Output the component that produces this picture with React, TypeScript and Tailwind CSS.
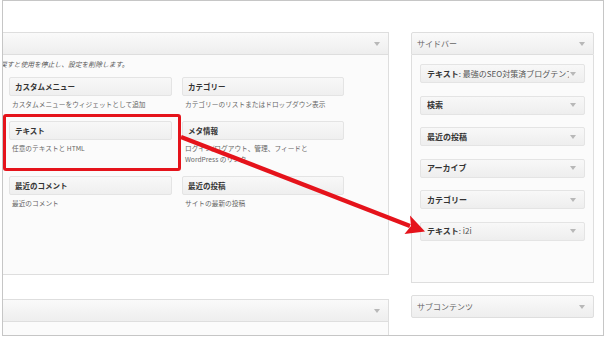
import React from "react";

const Caret = () => (
  <svg width="6" height="4" viewBox="0 0 6 4" className="shrink-0">
    <path d="M0 0 L6 0 L3 4 Z" fill="#b8b8b8" />
  </svg>
);

type Widget = { title: string; desc: React.ReactNode };

const available: Widget[] = [
  { title: "カスタムメニュー", desc: "カスタムメニューをウィジェットとして追加" },
  { title: "カテゴリー", desc: "カテゴリーのリストまたはドロップダウン表示" },
  { title: "テキスト", desc: "任意のテキストと HTML" },
  {
    title: "メタ情報",
    desc: (
      <>
        ログイン/ログアウト、管理、フィードと
        <br />
        WordPress のリンク
      </>
    ),
  },
  { title: "最近のコメント", desc: "最近のコメント" },
  { title: "最近の投稿", desc: "サイトの最新の投稿" },
];

const sidebarWidgets: { title: string; sub?: string }[] = [
  { title: "テキスト", sub: ": 最強のSEO対策済ブログテンプレート" },
  { title: "検索" },
  { title: "最近の投稿" },
  { title: "アーカイブ" },
  { title: "カテゴリー" },
  { title: "テキスト", sub: ": i2i" },
];

const PanelHeader = ({ label, className = "" }: { label?: string; className?: string }) => (
  <div
    className={`h-[23px] flex items-center justify-between pl-[5px] pr-[8px] bg-gradient-to-b from-[#fafafa] to-[#eeeeee] border-[#dedede] ${className}`}
  >
    <span className="text-[8px] text-[#666]">{label}</span>
    <Caret />
  </div>
);

export default function App() {
  return (
    <div className="relative w-[605px] h-[337px] overflow-hidden bg-white font-['Noto_Sans_CJK_JP',sans-serif]">
      <div className="ml-[2px] w-[602px] h-[336px] border border-[#c6c6c6] flex overflow-hidden">
        {/* 利用できるウィジェット */}
        <div className="w-[386px] shrink-0 pt-[31px] flex flex-col">
          <PanelHeader className="border-y border-r" />
          <div className="h-[220px] bg-[#fbfbfb] border-b border-r border-[#dedede] overflow-hidden">
            <p className="ml-[-3px] mt-[3px] text-[6.8px] leading-[13px] italic text-[#555] whitespace-nowrap">
              戻すと使用を停止し、設定を削除します。
            </p>
            <div className="mt-[6px] ml-[6px] grid grid-cols-[163px_162px] gap-x-[10px] gap-y-[11px]">
              {available.map((w) => (
                <div key={w.title}>
                  <div className="h-[19px] flex items-center pl-[5px] rounded-[2px] border border-[#e4e4e4] bg-gradient-to-b from-[#f8f8f8] to-[#efefef] text-[7.5px] font-bold text-[#333]">
                    {w.title}
                  </div>
                  <div className="mt-[3px] pl-[3px] text-[6.7px] leading-[11px] text-[#666]">{w.desc}</div>
                </div>
              ))}
            </div>
          </div>
          <PanelHeader className="mt-[24px] border-y border-r" />
          <div className="flex-1 bg-[#fbfbfb] border-r border-[#dedede]" />
        </div>

        {/* サイドバー */}
        <div className="ml-[22px] w-[183px] shrink-0 pt-[31px] flex flex-col">
          <PanelHeader label="サイドバー" className="border rounded-t-[2px]" />
          <div className="h-[228px] bg-[#fbfbfb] border-x border-b border-[#dedede] pt-[9px] px-[8px] flex flex-col gap-[12.6px]">
            {sidebarWidgets.map((w, i) => (
              <div
                key={i}
                className="h-[19px] flex items-center justify-between pl-[6px] pr-[8px] rounded-[2px] border border-[#e4e4e4] bg-gradient-to-b from-[#f8f8f8] to-[#eeeeee]"
              >
                <span className="text-[8px] text-[#333] whitespace-nowrap overflow-hidden w-[142px]">
                  <b>{w.title}</b>
                  {w.sub && <span className="font-normal text-[#555]">{w.sub}</span>}
                </span>
                <Caret />
              </div>
            ))}
          </div>
          <PanelHeader label="サブコンテンツ" className="mt-[12px] border rounded-[2px]" />
        </div>
      </div>

      {/* 注釈 */}
      <div className="absolute left-[3px] top-[114px] w-[178px] h-[57px] border-[3px] border-[#e5131b] rounded-[3px]" />
      <svg className="absolute left-0 top-0" width="605" height="337" viewBox="0 0 605 337">
        <line x1="181" y1="137" x2="410" y2="226" stroke="#e5131b" strokeWidth="4.5" />
        <polygon points="425,231.5 404.5,234 411,226 410,215.5" fill="#e5131b" />
      </svg>
    </div>
  );
}
